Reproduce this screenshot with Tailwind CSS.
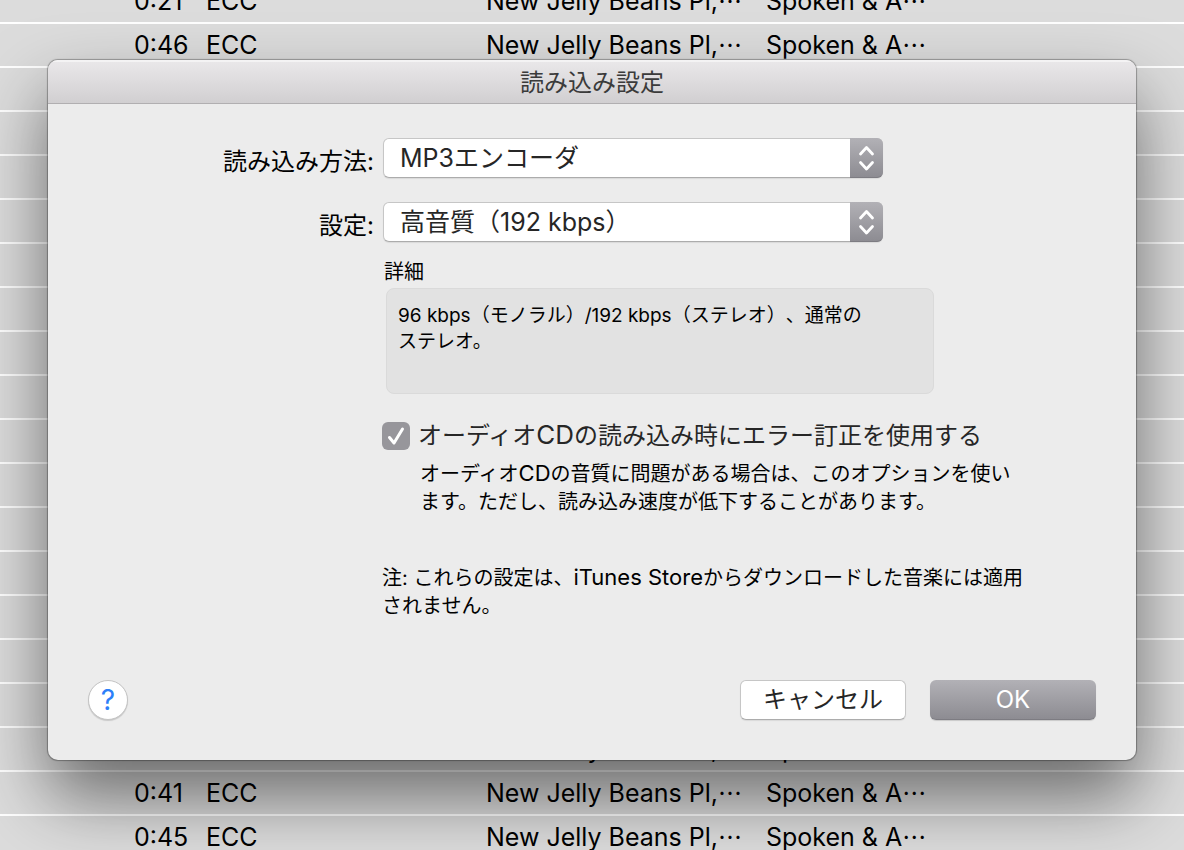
<!DOCTYPE html>
<html lang="ja">
<head>
  <meta charset="UTF-8" />
  <meta name="viewport" content="width=device-width, initial-scale=1.0"/>
  <title>読み込み設定</title>
  <script src="https://cdn.jsdelivr.net/npm/@tailwindcss/browser@4"></script>
</head>
<body class="grid h-screen overflow-hidden bg-[#dcdcdc] font-['Inter','Noto_Sans_CJK_JP',sans-serif] text-2xl text-black [text-spacing-trim:space-all]">

  <!-- track list behind the dialog -->
  <table class="col-start-1 row-start-1 -mt-[21px] w-full table-fixed self-start whitespace-nowrap text-left text-[25px] leading-[42px]">
    <colgroup>
      <col class="w-[206px]" />
      <col class="w-[280px]" />
      <col class="w-[280px]" />
      <col />
    </colgroup>
    <tbody id="tracks"></tbody>
  </table>

  <main role="dialog" aria-labelledby="dialogTitle" class="z-10 col-start-1 row-start-1 mx-12 mt-15 self-start overflow-hidden rounded-[10px] bg-[#ececec] shadow-[0_0_1px_1px_rgba(0,0,0,0.3),0_36px_70px_rgba(0,0,0,0.52)]">
    <h1 id="dialogTitle" class="h-11 border-t-2 border-b border-t-[#f4f3f4] border-b-[#b1afb1] bg-linear-to-b from-[#e9e7e9] to-[#d1cfd1] text-center leading-[42px] text-[#3b3b3b]">読み込み設定</h1>

    <form class="px-10 pt-[34px] pb-10" onsubmit="return false">
      <div class="grid grid-cols-[286px_1fr] gap-x-[9px] gap-y-6">
        <label for="encoder" class="h-10 pt-1 text-right leading-10">読み込み方法:</label>
        <div class="grid h-10 w-[500px] grid-cols-[1fr_33px]">
          <select id="encoder" class="col-span-2 col-start-1 row-start-1 appearance-none rounded-md border border-[#c6c6c6] border-b-[#acacac] bg-white pt-0.5 pl-4 text-[25px] text-[#262626] shadow-[0_1px_1px_rgba(0,0,0,0.08)]">
            <option>MP3エンコーダ</option>
          </select>
          <span class="pointer-events-none col-start-2 row-start-1 flex items-center justify-center rounded-r-md border-b border-[#7d7c82] bg-linear-to-b from-[#b2b1b6] to-[#8d8c92]">
            <svg class="h-7 w-5" viewBox="0 0 20 28" fill="none" stroke="white" stroke-width="2.800" stroke-linecap="round" stroke-linejoin="round"><path d="M3.500 10l6-6.500 6 6.500M3.500 18.500l6 6.500 6-6.500"/></svg>
          </span>
        </div>

        <label for="quality" class="h-10 pt-1 text-right leading-10">設定:</label>
        <div class="grid h-10 w-[500px] grid-cols-[1fr_33px]">
          <select id="quality" class="col-span-2 col-start-1 row-start-1 appearance-none rounded-md border border-[#c6c6c6] border-b-[#acacac] bg-white pt-0.5 pl-4 text-[25px] text-[#262626] shadow-[0_1px_1px_rgba(0,0,0,0.08)]">
            <option>高音質（192 kbps）</option>
          </select>
          <span class="pointer-events-none col-start-2 row-start-1 flex items-center justify-center rounded-r-md border-b border-[#7d7c82] bg-linear-to-b from-[#b2b1b6] to-[#8d8c92]">
            <svg class="h-7 w-5" viewBox="0 0 20 28" fill="none" stroke="white" stroke-width="2.800" stroke-linecap="round" stroke-linejoin="round"><path d="M3.500 10l6-6.500 6 6.500M3.500 18.500l6 6.500 6-6.500"/></svg>
          </span>
        </div>
      </div>

      <div class="pl-[294px] text-xl leading-7">
        <h2 class="mt-4 pl-0.5">詳細</h2>
        <p class="mt-0.5 ml-1 h-[106px] w-[548px] rounded-lg border border-[#dadada] bg-[#e2e2e2] px-[11px] pt-[14px] text-[19px] leading-[26px]">96 kbps（モノラル）/192 kbps（ステレオ）、通常の<br>ステレオ。</p>

        <label class="mt-7 flex h-7 items-center gap-2 text-2xl text-[#262626]">
          <span class="grid size-7">
            <input type="checkbox" checked class="peer col-start-1 row-start-1 size-7 appearance-none rounded-md bg-white checked:bg-[#97969b]" />
            <svg class="pointer-events-none invisible col-start-1 row-start-1 size-7 peer-checked:visible" viewBox="0 0 28 28" fill="none" stroke="white" stroke-width="3" stroke-linecap="round" stroke-linejoin="round"><path d="M7.500 15.500l4.500 5.500 8.500-14"/></svg>
          </span>
          <span>オーディオ<span class="text-[26px] leading-none">CD</span>の読み込み時にエラー訂正を使用する</span>
        </label>
        <p class="mt-[10px] pl-[38px]">オーディオ<span class="text-[22px] leading-none">CD</span>の音質に問題がある場合は、このオプションを使い<br>ます。ただし、読み込み速度が低下することがあります。</p>
        <p class="mt-12">注: これらの設定は、<span class="text-[22px] leading-none">iTunes Store</span>からダウンロードした音楽には適用<br>されません。</p>
      </div>

      <div class="mt-15 flex items-center gap-6">
        <button type="button" aria-label="ヘルプ" class="mr-auto size-10 rounded-full border border-[#c4c4c4] bg-white text-[28px] leading-9 text-[#2d7ff9] shadow-[0_1px_1px_rgba(0,0,0,0.15)]">?</button>
        <button type="button" class="h-10 w-[166px] rounded-md border border-[#c6c6c6] border-b-[#acacac] bg-white text-[#262626] shadow-[0_1px_1px_rgba(0,0,0,0.08)]">キャンセル</button>
        <button type="submit" class="h-10 w-[166px] rounded-md border-b border-[#7d7c82] bg-linear-to-b from-[#b2b1b6] to-[#8d8c92] text-white shadow-[0_1px_1px_rgba(0,0,0,0.15)]">OK</button>
      </div>
    </form>
  </main>

  <script>
    const blank = ["", "", "", ""];
    const rows = [
      ["0:21", "ECC", "New Jelly Beans Pl,", "Spoken & A"],
      ["0:46", "ECC", "New Jelly Beans Pl,", "Spoken & A"],
      ...Array(15).fill(blank),
      ["", "", "New Jelly Beans Pl,", "Spoken & A"],
      ["0:41", "ECC", "New Jelly Beans Pl,", "Spoken & A"],
      ["0:45", "ECC", "New Jelly Beans Pl,", "Spoken & A"]
    ];

    // cut-off names end in a centred ellipsis
    const clipped = text => text ? text.replace("&", "&amp;") + `<span class="font-['Noto_Sans_CJK_JP'] text-2xl leading-6">…</span>` : "";

    document.getElementById("tracks").innerHTML = rows.map(([time, artist, album, genre]) => `
      <tr class="h-11 border-b-2 border-white">
        <td class="pl-[134px]">${time}</td>
        <td>${artist}</td>
        <td>${clipped(album)}</td>
        <td>${clipped(genre)}</td>
      </tr>`).join("");
  </script>
</body>
</html>
